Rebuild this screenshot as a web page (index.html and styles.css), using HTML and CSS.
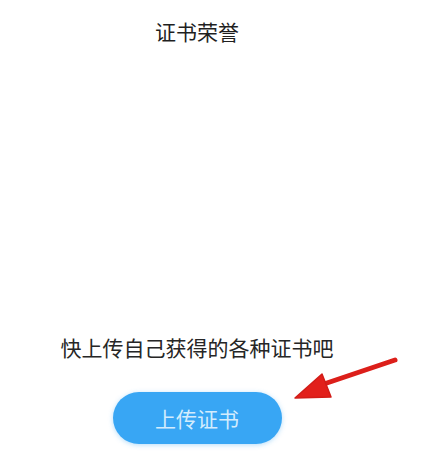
FILE: index.html
```html
<!DOCTYPE html>
<html lang="zh">
<head>
<meta charset="utf-8">
<link rel="stylesheet" href="styles.css">
</head>
<body>
<div class="page">
  <h1 class="title">证书荣誉</h1>
  <div class="spacer"></div>
  <p class="hint">快上传自己获得的各种证书吧</p>
  <div class="btn-row">
    <button class="upload">上传证书</button>
  </div>
</div>
<svg class="arrow" width="422" height="453" viewBox="0 0 422 453">
  <line x1="395" y1="360" x2="318" y2="386" stroke="#dc1f1a" stroke-width="5" stroke-linecap="round"/>
  <polygon points="295,398 322,374 331,397" fill="#e2201b" stroke="#d21c17" stroke-width="1.5" stroke-linejoin="round"/>
</svg>
</body>
</html>
```
FILE: styles.css
```css
html, body {
  margin: 0;
  padding: 0;
  background: #ffffff;
}
body {
  position: relative;
  width: 422px;
  height: 453px;
  overflow: hidden;
  font-family: "Noto Sans CJK SC", "Noto Sans", sans-serif;
}
.page {
  width: 394px;
  display: flex;
  flex-direction: column;
  align-items: center;
}
.title {
  margin: 17px 0 0 0;
  font-size: 21px;
  font-weight: 400;
  line-height: 28px;
  color: #1f1f1f;
}
.spacer {
  height: 288px;
}
.hint {
  margin: 0;
  font-size: 21px;
  line-height: 28px;
  color: #262626;
}
.btn-row {
  margin-top: 31px;
}
.upload {
  width: 169px;
  height: 52px;
  border: none;
  border-radius: 26px;
  background: #38a6f4;
  color: #d3ecfd;
  font-family: "Noto Sans CJK SC", "Noto Sans", sans-serif;
  font-size: 21px;
  padding: 0;
  box-shadow: 0 1px 5px rgba(90, 180, 245, 0.45);
}
.arrow {
  position: absolute;
  left: 0;
  top: 0;
}
```
